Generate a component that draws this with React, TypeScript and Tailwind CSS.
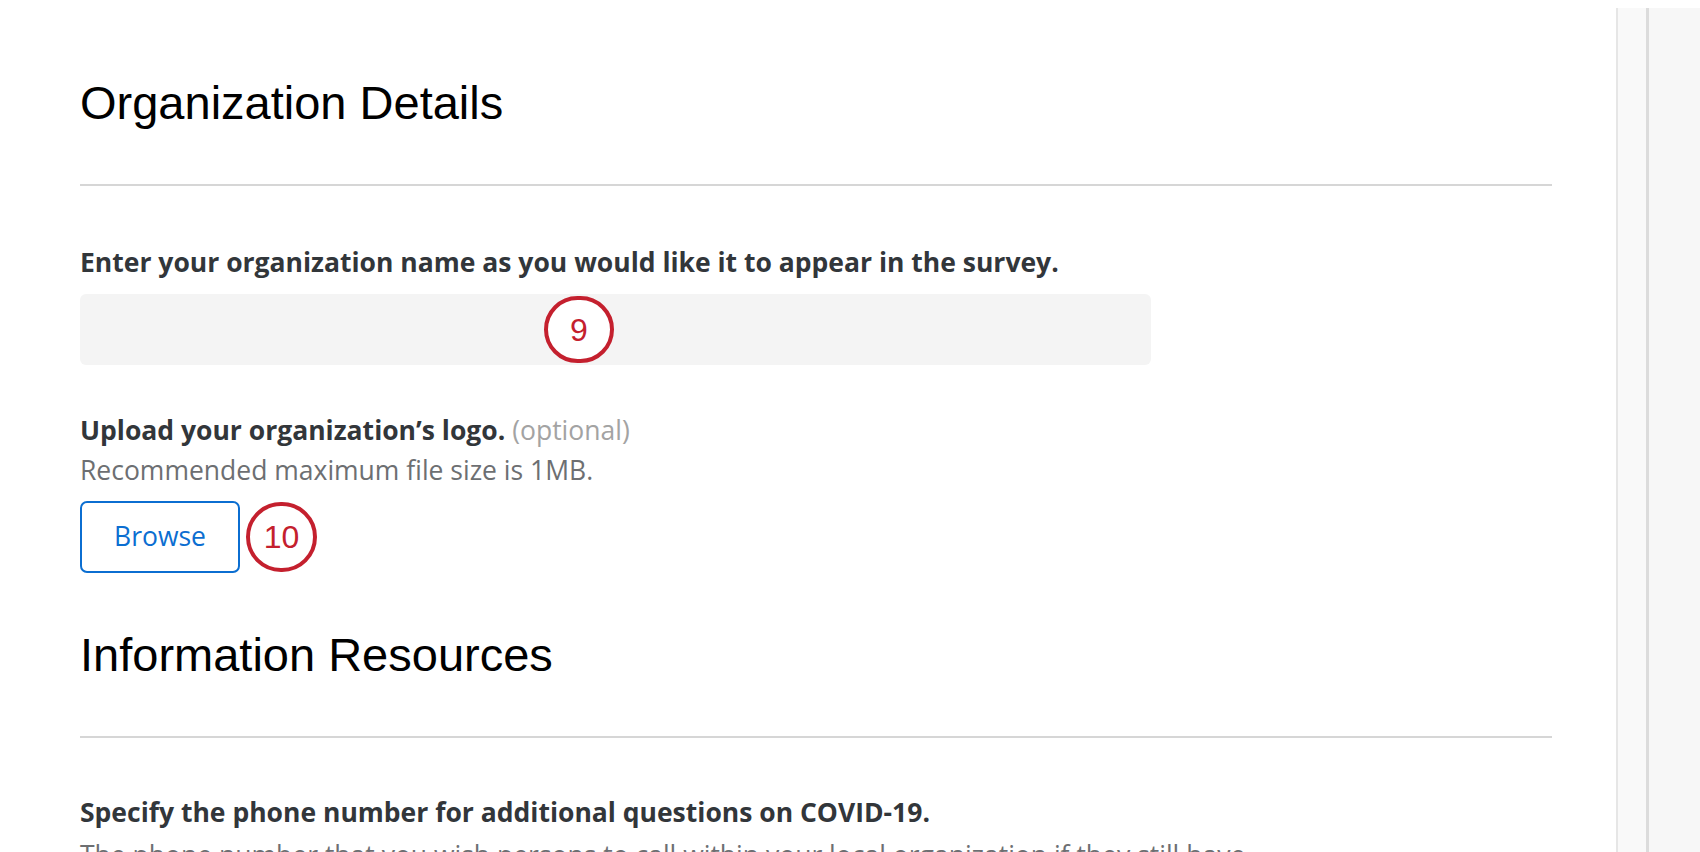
import React from "react";

const body = { fontFamily: '"Open Sans", "Liberation Sans", Arial, sans-serif' };
const head = { fontFamily: '"Liberation Sans", Arial, sans-serif' };

function Marker({ n, className }: { n: string; className: string }) {
  return (
    <div
      className={`flex items-center justify-center rounded-full border-[4px] border-[#c4202e] bg-white text-[#c4202e] ${className}`}
      style={{ fontFamily: '"Liberation Sans", Arial, sans-serif' }}
    >
      <span className="text-[32px] leading-none">{n}</span>
    </div>
  );
}

export default function App() {
  return (
    <div className="flex h-[852px] overflow-hidden bg-white">
      <div className="w-[1616px] shrink-0 pl-[80px]">
        <div className="w-[1472px]">
          <h1 className="pt-[79px] text-[47px] leading-[48px] text-black" style={head}>
            Organization Details
          </h1>
          <div className="mt-[57px] h-[2px] bg-[#d6d6d6]" />

          <div style={body}>
            <p className="mt-[61px] text-[26.5px] font-bold leading-[30px] text-[#32363a]">
              Enter your organization name as you would like it to appear in the survey.
            </p>
            <div className="relative mt-[17px] h-[71px] w-[1071px] rounded-[6px] bg-[#f4f4f4]">
              <Marker n="9" className="absolute left-[464px] top-[2px] h-[67px] w-[70px]" />
            </div>

            <p className="mt-[50px] text-[26.5px] leading-[30px] text-[#32363a]">
              <span className="font-bold">Upload your organization’s logo.</span>{" "}
              <span className="text-[#a3a3a3]">(optional)</span>
            </p>
            <p className="mt-[5px] text-[26.5px] leading-[40px] text-[#6d6f72]">
              Recommended maximum file size is 1MB.
            </p>
            <div className="mt-[11px] flex items-center gap-[6px]">
              <button className="flex h-[72px] w-[160px] items-center justify-center rounded-[7px] border-2 border-[#0b6ed1] bg-white text-[26.5px] text-[#0b6ed1]">
                Browse
              </button>
              <Marker n="10" className="h-[70px] w-[71px]" />
            </div>
          </div>

          <h2 className="mt-[58px] text-[47px] leading-[48px] text-black" style={head}>
            Information Resources
          </h2>
          <div className="mt-[57px] h-[2px] bg-[#d6d6d6]" />

          <div style={body}>
            <p className="mt-[59px] text-[26.5px] font-bold leading-[30px] text-[#32363a]">
              Specify the phone number for additional questions on COVID-19.
            </p>
            <p className="mt-[8px] w-[1220px] text-[26.5px] leading-[40px] text-[#6d6f72]">
              The phone number that you wish persons to call within your local organization if they still have
              questions.
            </p>
          </div>
        </div>
      </div>
      <div className="mt-[8px] flex flex-1">
        <div className="w-[30px] border-l-2 border-[#e6e6e6] bg-[#f9f9f9]" />
        <div className="flex-1 border-l-[3px] border-[#dcdcdc] bg-[#f7f7f7]" />
      </div>
    </div>
  );
}
